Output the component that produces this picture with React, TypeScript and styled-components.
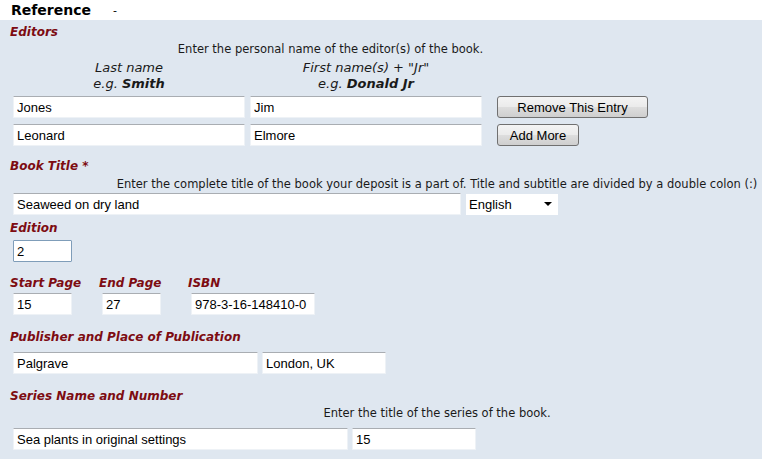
import React from "react";
import styled, { createGlobalStyle } from "styled-components";

const Global = createGlobalStyle`
  html, body { margin: 0; padding: 0; background: #dfe7f0; overflow: hidden; }
  body { font-family: Verdana, "DejaVu Sans", sans-serif; color: #111; }
`;

const Page = styled.div`
  width: 762px;
  height: 459px;
  overflow: hidden;
  display: flex;
  flex-direction: column;
`;

const Header = styled.div`
  height: 20px;
  box-sizing: border-box;
  padding-top: 1px;
  background: #ffffff;
  display: flex;
  align-items: center;
  padding-left: 11px;
  gap: 22px;
  font-family: Verdana, "DejaVu Sans", sans-serif;
`;

const HeaderTitle = styled.span`
  font-size: 14px;
  font-weight: bold;
  color: #000;
  line-height: 19px;
`;

const HeaderDash = styled.span`
  font-size: 11px;
  color: #000;
`;

const Panel = styled.div`
  flex: 1;
  background: #dfe7f0;
  padding: 4px 0 0 10px;
  display: flex;
  flex-direction: column;
`;

const Label = styled.div<{ $mt?: number }>`
  margin-top: ${(p) => p.$mt ?? 0}px;
  height: 16px;
  line-height: 16px;
  font-size: 12px;
  font-weight: bold;
  font-style: italic;
  color: #7d0c12;
  white-space: nowrap;
`;

const Hint = styled.div<{ $mt?: number; $width: number }>`
  margin-top: ${(p) => p.$mt ?? 0}px;
  width: ${(p) => p.$width}px;
  text-align: center;
  font-size: 11.5px;
  line-height: 14px;
  height: 14px;
  color: #1a1a1a;
  white-space: nowrap;
`;

const EditorGrid = styled.div`
  margin-top: 2px;
  margin-left: 3px;
  display: grid;
  grid-template-columns: 232px 232px 161px;
  column-gap: 5px;
  row-gap: 6px;
  align-items: center;
`;

const EditorHint = styled.div`
  grid-column: 1 / 4;
  text-align: center;
  font-size: 11.5px;
  line-height: 14px;
  color: #1a1a1a;
  margin-left: -10px;
  margin-right: -10px;
  margin-bottom: -2px;
`;

const ColHead = styled.div`
  text-align: center;
  font-size: 13px;
  font-style: italic;
  line-height: 16px;
  color: #1a1a1a;
  margin-bottom: -2px;
  b { font-weight: bold; }
`;

const ButtonCell = styled.div`
  padding-left: 10px;
  display: flex;
`;

const Field = styled.input<{ $w: number; $focus?: boolean }>`
  box-sizing: border-box;
  width: ${(p) => p.$w}px;
  height: 22px;
  margin: 0;
  padding: 1px 3px 0;
  font-family: Arial, "Liberation Sans", sans-serif;
  font-size: 13px;
  color: #000;
  background: #fff;
  border: 1px solid;
  border-color: ${(p) =>
    p.$focus ? "#7f9db9" : "#a9adb2 #eef2f6 #eef2f6 #eef2f6"};
  border-radius: 1px;
  outline: none;
`;

const Btn = styled.button<{ $w: number }>`
  box-sizing: border-box;
  width: ${(p) => p.$w}px;
  height: 22px;
  padding: 0;
  font-family: Arial, "Liberation Sans", sans-serif;
  font-size: 13px;
  color: #000;
  border: 1px solid #707070;
  border-radius: 3px;
  background: linear-gradient(#f4f4f4 0%, #ebebeb 48%, #dddddd 52%, #cfcfcf 100%);
`;

const Row = styled.div<{ $mt?: number; $gap?: number }>`
  margin-top: ${(p) => p.$mt ?? 0}px;
  margin-left: 3px;
  display: flex;
  align-items: center;
  gap: ${(p) => p.$gap ?? 4}px;
`;

const Select = styled.div`
  box-sizing: border-box;
  width: 92px;
  height: 21px;
  background: #fff;
  display: flex;
  align-items: center;
  justify-content: space-between;
  padding: 0 6px 0 3px;
  font-family: Arial, "Liberation Sans", sans-serif;
  font-size: 13px;
  color: #000;
`;

const SmallFields = styled.div`
  margin-top: 2px;
  display: grid;
  grid-template-columns: 89px 89px auto;
  row-gap: 2px;
  align-items: center;
`;

const Cell = styled.div`
  padding-left: 3px;
`;

export default function App() {
  return (
    <Page>
      <Global />
      <Header>
        <HeaderTitle>Reference</HeaderTitle>
        <HeaderDash>-</HeaderDash>
      </Header>
      <Panel>
        <Label>Editors</Label>
        <EditorGrid>
          <EditorHint>Enter the personal name of the editor(s) of the book.</EditorHint>
          <ColHead>
            Last name
            <br />
            e.g. <b>Smith</b>
          </ColHead>
          <ColHead>
            First name(s) + "Jr"
            <br />
            e.g. <b>Donald Jr</b>
          </ColHead>
          <div />
          <Field $w={232} defaultValue="Jones" />
          <Field $w={232} defaultValue="Jim" />
          <ButtonCell>
            <Btn $w={161}>Remove This Entry</Btn>
          </ButtonCell>
          <Field $w={232} defaultValue="Leonard" />
          <Field $w={232} defaultValue="Elmore" />
          <ButtonCell>
            <Btn $w={82}>Add More</Btn>
          </ButtonCell>
        </EditorGrid>

        <Label $mt={12}>Book Title *</Label>
        <Hint $mt={3} $width={854}>
          Enter the complete title of the book your deposit is a part of. Title and subtitle are divided by a double colon (:)
        </Hint>
        <Row $mt={2} $gap={5}>
          <Field $w={448} defaultValue="Seaweed on dry land" />
          <Select>
            <span>English</span>
            <svg width="8" height="4" viewBox="0 0 8 4">
              <path d="M0 0 H8 L4 4 Z" fill="#000" />
            </svg>
          </Select>
        </Row>

        <Label $mt={5}>Edition</Label>
        <Row $mt={4}>
          <Field $w={59} $focus defaultValue="2" />
        </Row>

        <SmallFields>
          <Label $mt={11}>Start Page</Label>
          <Label $mt={11}>End Page</Label>
          <Label $mt={11}>ISBN</Label>
          <Cell>
            <Field $w={59} defaultValue="15" />
          </Cell>
          <Cell>
            <Field $w={59} defaultValue="27" />
          </Cell>
          <Cell>
            <Field $w={124} defaultValue="978-3-16-148410-0" />
          </Cell>
        </SmallFields>

        <Label $mt={14}>Publisher and Place of Publication</Label>
        <Row $mt={7}>
          <Field $w={245} defaultValue="Palgrave" />
          <Field $w={124} defaultValue="London, UK" />
        </Row>

        <Label $mt={14}>Series Name and Number</Label>
        <Hint $mt={2} $width={854}>
          Enter the title of the series of the book.
        </Hint>
        <Row $mt={8}>
          <Field $w={335} defaultValue="Sea plants in original settings" />
          <Field $w={124} defaultValue="15" />
        </Row>
      </Panel>
    </Page>
  );
}
